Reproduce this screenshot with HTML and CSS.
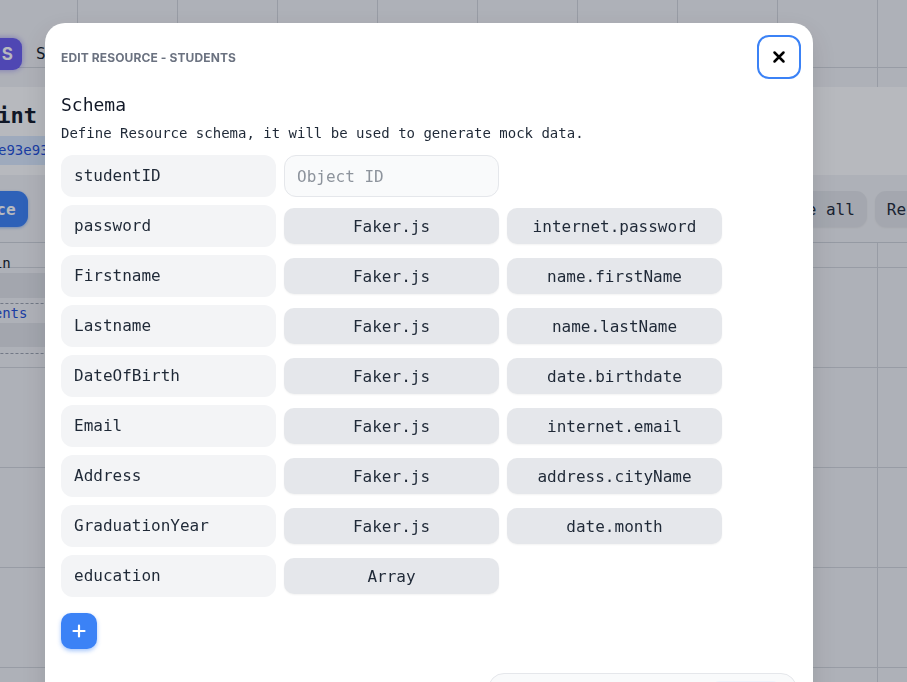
FILE: index.html
```html
<!DOCTYPE html>
<html lang="en">
<head>
<meta charset="utf-8">
<title>Edit Resource - Students</title>
<link rel="stylesheet" href="styles.css">
</head>
<body>
<div class="page">
  <nav class="nav">
    <div class="avatar">S</div>
    <span class="nav-name">St</span>
  </nav>
  <section class="head">
    <h1 class="head-title">Endpoint</h1>
    <div class="chip">/api/65e93e93e93f7/students</div>
  </section>
  <section class="toolbar">
    <button class="tb-btn tb-primary">Add Resource</button>
    <div class="tb-group">
      <button class="tb-btn tb-gray">Delete all</button>
      <button class="tb-btn tb-gray">Reset</button>
    </div>
  </section>
  <section class="table">
    <div class="t-head">Domain</div>
    <div class="t-row t-dark">_</div>
    <div class="t-row t-link">students</div>
    <div class="t-row t-dark">100</div>
    <div class="t-sep"></div>
  </section>
</div>

<div class="overlay">
  <div class="modal">
    <div class="modal-head">
      <h2 class="modal-title">Edit Resource - Students</h2>
      <button class="close" aria-label="Close">
        <svg width="14" height="14" viewBox="0 0 14 14"><path d="M2.5 2.5 L11.5 11.5 M11.5 2.5 L2.5 11.5" stroke="#000" stroke-width="2.5" stroke-linecap="round"/></svg>
      </button>
    </div>
    <h3 class="schema-title">Schema</h3>
    <p class="schema-desc">Define Resource schema, it will be used to generate mock data.</p>
    <div class="fields">
      <div class="field-row">
        <div class="field-name">studentID</div>
        <input class="field-input" placeholder="Object ID">
      </div>
      <div class="field-row">
        <div class="field-name">password</div>
        <button class="field-btn">Faker.js</button>
        <button class="field-btn">internet.password</button>
      </div>
      <div class="field-row">
        <div class="field-name">Firstname</div>
        <button class="field-btn">Faker.js</button>
        <button class="field-btn">name.firstName</button>
      </div>
      <div class="field-row">
        <div class="field-name">Lastname</div>
        <button class="field-btn">Faker.js</button>
        <button class="field-btn">name.lastName</button>
      </div>
      <div class="field-row">
        <div class="field-name">DateOfBirth</div>
        <button class="field-btn">Faker.js</button>
        <button class="field-btn">date.birthdate</button>
      </div>
      <div class="field-row">
        <div class="field-name">Email</div>
        <button class="field-btn">Faker.js</button>
        <button class="field-btn">internet.email</button>
      </div>
      <div class="field-row">
        <div class="field-name">Address</div>
        <button class="field-btn">Faker.js</button>
        <button class="field-btn">address.cityName</button>
      </div>
      <div class="field-row">
        <div class="field-name">GraduationYear</div>
        <button class="field-btn">Faker.js</button>
        <button class="field-btn">date.month</button>
      </div>
      <div class="field-row">
        <div class="field-name">education</div>
        <button class="field-btn">Array</button>
      </div>
    </div>
    <button class="add-btn" aria-label="Add field">
      <svg width="14" height="14" viewBox="0 0 14 14"><path d="M7 1.5 V12.5 M1.5 7 H12.5" stroke="#fff" stroke-width="2.2" stroke-linecap="round"/></svg>
    </button>
    <div class="footer">
      <div class="footer-spacer"></div>
      <div class="footer-btn"></div>
    </div>
  </div>
</div>
</body>
</html>
```

FILE: styles.css
```css
* { box-sizing: border-box; }

html, body { height: 100%; }

body {
  margin: 0;
  overflow: hidden;
  background-color: #f3f4f6;
  background-image:
    linear-gradient(to right, #d3d6db 1px, transparent 1px),
    linear-gradient(to bottom, #d3d6db 1px, transparent 1px);
  background-size: 100px 100px;
  background-position: 77px 67px;
  font-family: "DejaVu Sans Mono", "Liberation Mono", monospace;
  color: #1f2937;
}

/* ---------- page underneath ---------- */
.page { width: 907px; }

.nav {
  height: 87px;
  display: flex;
  align-items: flex-start;
  padding-top: 38px;
  margin-left: -18px;
  gap: 14px;
}
.avatar {
  width: 40px;
  height: 32px;
  border-radius: 9px;
  background: #6a5cf0;
  color: #fff;
  font-family: Inter, "Noto Sans", sans-serif;
  font-weight: 700;
  font-size: 17px;
  display: flex;
  align-items: center;
  justify-content: flex-end;
  padding-right: 9px;
  box-shadow: 0 0 6px rgba(106, 92, 240, 0.6);
}
.nav-name {
  white-space: nowrap;
  font-size: 16px;
  line-height: 32px;
  color: #111827;
}

.head {
  height: 88px;
  background: #ffffff;
  padding-top: 14px;
  margin-left: -69px;
  margin-right: -200px;
}
.head-title {
  margin: 0;
  font-size: 22px;
  font-weight: 700;
  line-height: 30px;
  color: #111827;
}
.chip {
  display: inline-block;
  margin-top: 5px;
  margin-left: -40px;
  padding: 0 8px 0 48px;
  height: 29px;
  line-height: 29px;
  font-size: 14px;
  color: #1d4ed8;
  background: #dbeafe;
}

.toolbar {
  height: 68px;
  display: flex;
  align-items: center;
  justify-content: space-between;
  margin-left: -112px;
  margin-right: -40px;
  border-bottom: 1px solid #cfd3d9;
  background: #f3f4f6;
  padding-top: 1px;
}
.tb-group { display: flex; gap: 8px; }
.tb-btn {
  height: 36px;
  border: none;
  border-radius: 11px;
  padding: 0 12px;
  font-family: inherit;
  font-size: 16px;
}
.tb-primary {
  background: #3b82f6;
  color: #fff;
  font-weight: 700;
  box-shadow: 0 1px 3px rgba(59, 130, 246, 0.5);
}
.tb-gray {
  background: #e4e6ea;
  color: #1f2937;
  box-shadow: 0 1px 2px rgba(0, 0, 0, 0.06);
}

.table { margin-left: -80px; width: 400px; font-size: 14px; }
.t-head {
  height: 30px;
  line-height: 40px;
  padding-left: 40px;
  color: #111827;
}
.t-row { padding-left: 40px; }
.t-dark { background: #e2e4e8; color: #1f2937; height: 25px; line-height: 25px; }
.t-link {
  color: #1d4ed8;
  border-top: 1px dashed #9ca3af;
  margin-top: 5px;
  height: 20px;
  line-height: 19px;
}
.t-link + .t-dark { height: 24px; line-height: 24px; }
.t-sep { margin-top: 6px; border-top: 1px dashed #9ca3af; }

/* ---------- overlay + modal ---------- */
.overlay {
  position: fixed;
  inset: 0;
  background: rgba(17, 24, 39, 0.3);
  padding: 23px 0 0 45px;
  overflow: hidden;
}

.modal {
  width: 768px;
  background: #ffffff;
  border-radius: 20px;
  padding: 12px 16px 40px 16px;
  box-shadow: 0 10px 25px rgba(0, 0, 0, 0.12);
}

.modal-head {
  display: flex;
  align-items: center;
  justify-content: space-between;
  margin-right: -4px;
}
.modal-title {
  margin: 0;
  font-family: Inter, "Noto Sans", sans-serif;
  font-size: 12px;
  font-weight: 700;
  text-transform: uppercase;
  color: #6b7280;
  letter-spacing: 0.01em;
}
.close {
  width: 44px;
  height: 44px;
  border: 2px solid #3b82f6;
  border-radius: 12px;
  background: #fff;
  display: flex;
  align-items: center;
  justify-content: center;
  padding: 0;
}

.schema-title {
  margin: 12px 0 0;
  font-size: 18px;
  font-weight: 400;
  line-height: 28px;
  color: #111827;
}
.schema-desc {
  margin: 4px 0 12px;
  font-size: 14px;
  line-height: 20px;
  color: #1f2937;
}

.fields { display: flex; flex-direction: column; gap: 8px; }
.field-row {
  display: grid;
  grid-template-columns: 215px 215px 215px;
  column-gap: 8px;
  align-items: center;
  height: 42px;
}
.field-name {
  height: 42px;
  background: #f3f4f6;
  border-radius: 12px;
  padding: 0 13px;
  font-size: 16px;
  line-height: 42px;
  color: #1f2937;
}
.field-input {
  height: 42px;
  border: 1px solid #e5e7eb;
  background: #f9fafb;
  border-radius: 12px;
  padding: 0 12px;
  font-family: inherit;
  font-size: 16px;
  color: #1f2937;
  outline: none;
}
.field-input::placeholder { color: #8d939c; }
.field-btn {
  height: 36px;
  border: none;
  border-radius: 10px;
  background: #e5e7eb;
  font-family: inherit;
  font-size: 16px;
  color: #1f2937;
  box-shadow: 0 1px 2px rgba(0, 0, 0, 0.05);
  padding: 0;
}

.add-btn {
  margin-top: 16px;
  width: 36px;
  height: 36px;
  border: none;
  border-radius: 10px;
  background: #3b82f6;
  display: flex;
  align-items: center;
  justify-content: center;
  padding: 0;
  box-shadow: 0 2px 4px rgba(59, 130, 246, 0.45);
}

.footer {
  margin: 24px 0 0 427px;
  height: 48px;
  border: 1px solid #e5e7eb;
  border-radius: 16px;
  background: #f9fafb;
  display: flex;
  padding: 7px 14px 0 0;
}
.footer-spacer { flex: 1; }
.footer-btn {
  width: 72px;
  height: 36px;
  border-radius: 10px;
  background: #eef4fd;
}
```
